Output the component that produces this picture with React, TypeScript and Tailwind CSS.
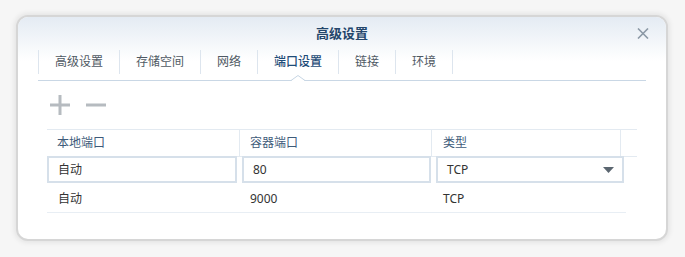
import type { ReactNode } from 'react'

const tabs = ['高级设置', '存储空间', '网络', '端口设置', '链接', '环境']
const ACTIVE = 3

const font = { fontFamily: '"Noto Sans", "Noto Sans CJK SC", sans-serif' }

function Tab({ label, active, last }: { label: string; active: boolean; last: boolean }) {
  return (
    <div
      className={`relative flex h-6 items-center border-l border-[#dde5ee] px-4 text-[12px] ${
        last ? 'border-r' : ''
      } ${active ? 'font-medium text-[#1f4c78]' : 'text-[#4f5963]'}`}
    >
      {label}
      {active && (
        <svg
          width="14"
          height="6"
          viewBox="0 0 14 6"
          className="absolute left-1/2 top-[25px] -translate-x-1/2"
        >
          <polygon points="0,6 7,0.5 14,6" fill="#fff" />
          <polyline points="0,5.5 7,0.5 14,5.5" fill="none" stroke="#c6d5e4" strokeWidth="1" />
        </svg>
      )}
    </div>
  )
}

function Box({ children, w, select }: { children: ReactNode; w: string; select?: boolean }) {
  return (
    <div
      className={`flex h-[27px] items-center justify-between border-2 border-[#d6e0ea] bg-white pl-[9px] pr-[8px] text-[12px] text-[#333] ${w}`}
    >
      <span>{children}</span>
      {select && (
        <svg width="11" height="6" viewBox="0 0 11 6">
          <polygon points="0,0 11,0 5.5,6" fill="#5b6670" />
        </svg>
      )}
    </div>
  )
}

export default function App() {
  return (
    <div className="min-h-[257px] bg-[#f6f6f6] pl-[16px] pt-[15px]" style={font}>
      <div className="h-[226px] w-[652px] overflow-hidden rounded-[12px] border-2 border-[#d6d6d6] bg-white shadow-[0_0_5px_2px_rgba(0,0,0,0.07)]">
        {/* 제목 + 탭 */}
        <div className="bg-[linear-gradient(#e4ebf3,#ffffff_44px)]">
          <div className="relative flex h-[33px] items-center justify-center pt-[1px]">
            <span className="text-[13px] font-bold text-[#24466b]">高级设置</span>
            <svg
              width="12"
              height="11"
              viewBox="0 0 12 11"
              className="absolute right-[17px] top-[11px]"
            >
              <path d="M1 0.5 L11 10.5 M11 0.5 L1 10.5" stroke="#8c99a6" strokeWidth="1.6" />
            </svg>
          </div>
          <div className="mx-[20px] flex border-b border-[#c9d7e5] pb-[6px]">
            {tabs.map((t, i) => (
              <Tab key={t} label={t} active={i === ACTIVE} last={i === tabs.length - 1} />
            ))}
          </div>
        </div>

        <div className="px-[29px]">
          {/* 추가 / 삭제 */}
          <div className="mt-[14px] flex h-[20px] items-center gap-[16px] pl-[3px]">
            <svg width="20" height="20" viewBox="0 0 20 20">
              <rect x="0" y="8.5" width="20" height="3" fill="#b6bbc0" />
              <rect x="8.5" y="0" width="3" height="20" fill="#b6bbc0" />
            </svg>
            <svg width="20" height="20" viewBox="0 0 20 20">
              <rect x="0" y="8.5" width="20" height="3" fill="#b6bbc0" />
            </svg>
          </div>

          {/* 표 */}
          <div className="mt-[14px] w-[590px]">
            <div className="grid h-[28px] grid-cols-[193px_192px_189px_16px] border-y border-[#e3eaf1] text-[12px] text-[#3e5b7a]">
              <div className="flex items-center border-r border-[#e3eaf1] pl-[10px]">本地端口</div>
              <div className="flex items-center border-r border-[#e3eaf1] pl-[10px]">容器端口</div>
              <div className="flex items-center border-r border-[#e3eaf1] pl-[11px]">类型</div>
              <div />
            </div>
            <div className="-mt-[1px] flex gap-[5px]">
              <Box w="w-[190px]">自动</Box>
              <Box w="w-[189px]">80</Box>
              <Box w="w-[188px]" select>
                TCP
              </Box>
            </div>
            <div className="grid h-[30px] w-[579px] grid-cols-[193px_192px_194px] border-b border-[#e8eef4] pt-[2px] text-[12px] text-[#333]">
              <div className="flex items-center pl-[11px]">自动</div>
              <div className="flex items-center pl-[10px]">9000</div>
              <div className="flex items-center pl-[11px]">TCP</div>
            </div>
          </div>
        </div>
      </div>
    </div>
  )
}
